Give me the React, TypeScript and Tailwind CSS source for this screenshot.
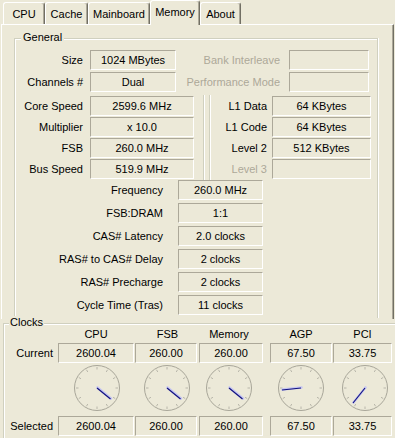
import React from "react";

const boxBase =
  "h-[20px] flex items-center justify-center border border-t-[#ACA899] border-l-[#ACA899] border-b-white border-r-white text-black leading-none";

function Tab({ w, children }: { w: string; children: React.ReactNode }) {
  return (
    <div
      className={`${w} h-[22px] flex items-center justify-center pt-[2px] border-l border-t border-white border-r border-r-[#716F64] rounded-tl-[3px] rounded-tr-[3px] shadow-[inset_-1px_0_0_#ACA899]`}
    >
      {children}
    </div>
  );
}

function Gauge({ dx, dy }: { dx: number; dy: number }) {
  const ticks = Array.from({ length: 12 }, (_, i) => i * 30);
  return (
    <svg width="48" height="48" viewBox="0 0 48 48">
      <circle cx="24" cy="24" r="22.5" fill="none" stroke="#A8A699" strokeWidth="1" />
      {ticks.map((a) => {
        const r = ((a - 90) * Math.PI) / 180;
        const x1 = 24 + Math.cos(r) * 18.5;
        const y1 = 24 + Math.sin(r) * 18.5;
        const x2 = 24 + Math.cos(r) * 21;
        const y2 = 24 + Math.sin(r) * 21;
        return (
          <line key={a} x1={x1} y1={y1} x2={x2} y2={y2} stroke="#B8B6AA" strokeWidth="1" />
        );
      })}
      <line
        x1="24.5"
        y1="23.5"
        x2={24.5 + dx}
        y2={23.5 + dy}
        stroke="#C6C6F2"
        strokeWidth="2.6"
        strokeLinecap="round"
      />
      <line x1="24" y1="24" x2={24 + dx} y2={24 + dy} stroke="#12127E" strokeWidth="1.2" />
    </svg>
  );
}

function TopRow({
  label,
  value,
  rlabel,
}: {
  label: string;
  value: string;
  rlabel: string;
}) {
  return (
    <div className="flex h-[20px] items-center">
      <div className="w-[68px] text-right">{label}</div>
      <div className={`${boxBase} ml-[7px] w-[86px]`}>{value}</div>
      <div className="w-[104px] text-right text-[#ACA899]">{rlabel}</div>
      <div className={`${boxBase} ml-[9px] w-[80px]`}></div>
    </div>
  );
}

function LeftRow({ label, value, cls }: { label: string; value: string; cls: string }) {
  return (
    <div className={`flex h-[20px] items-center ${cls}`}>
      <div className="w-[68px] text-right">{label}</div>
      <div className={`${boxBase} ml-[7px] w-[104px]`}>{value}</div>
    </div>
  );
}

function RightRow({
  label,
  value,
  cls,
  disabled,
}: {
  label: string;
  value: string;
  cls: string;
  disabled?: boolean;
}) {
  return (
    <div className={`flex h-[20px] items-center ${cls}`}>
      <div className={`w-[56px] text-right ${disabled ? "text-[#ACA899]" : ""}`}>{label}</div>
      <div className={`${boxBase} ml-[5px] w-[99px]`}>{value}</div>
    </div>
  );
}

function MidRow({ label, value, cls }: { label: string; value: string; cls: string }) {
  return (
    <div className={`flex h-[20px] items-center ${cls}`}>
      <div className="w-[148px] text-right">{label}</div>
      <div className={`${boxBase} ml-[15px] w-[85px]`}>{value}</div>
    </div>
  );
}

function ClockRow({ label, vals }: { label: string; vals: string[] }) {
  return (
    <div className="flex h-[20px] items-center">
      <div className="w-[54px] text-right pr-[5px]">{label}</div>
      <div className={`${boxBase} w-[76px]`}>{vals[0]}</div>
      <div className={`${boxBase} ml-[1px] w-[62px]`}>{vals[1]}</div>
      <div className={`${boxBase} ml-[2px] w-[64px]`}>{vals[2]}</div>
      <div className={`${boxBase} ml-[7px] w-[62px]`}>{vals[3]}</div>
      <div className={`${boxBase} ml-[1px] w-[59px]`}>{vals[4]}</div>
    </div>
  );
}

export default function App() {
  return (
    <div className="w-[395px] h-[438px] overflow-hidden bg-[#ECE9D8] text-black text-[11px] font-['Liberation_Sans',Arial,sans-serif] select-none">
      {/* Tabs */}
      <div className="flex h-[24px] items-end pl-[3px]">
        <Tab w="w-[42px]">CPU</Tab>
        <Tab w="w-[43px]">Cache</Tab>
        <Tab w="w-[62px]">Mainboard</Tab>
        <div className="relative z-10 w-[50px] h-[25px] mb-[-1px] flex items-center justify-center pb-[1px] bg-[#ECE9D8] border-l border-t border-white border-r border-r-[#716F64] rounded-tl-[3px] rounded-tr-[3px] shadow-[inset_-1px_0_0_#ACA899]">
          Memory
        </div>
        <Tab w="w-[41px]">About</Tab>
      </div>

      {/* Panel */}
      <div className="ml-[1px] w-[393px] h-[295px] border-l border-t border-white border-r border-r-[#716F64] shadow-[inset_-1px_0_0_#ACA899]">
        <div className="relative ml-[12px] mt-[13px] w-[364px] h-[280px] border border-b-0 border-[#D0D0BF] shadow-[inset_1px_1px_0_#fff,1px_0_0_#fff]">
          <div className="absolute left-[6px] top-[-8px] px-[2px] bg-[#ECE9D8] leading-[13px]">General</div>
          <div className="pt-[11px] flex flex-col">
            <TopRow label="Size" value="1024 MBytes" rlabel="Bank Interleave" />
            <div className="mt-[2px]">
              <TopRow label="Channels #" value="Dual" rlabel="Performance Mode" />
            </div>
            <div className="mt-[4px] flex">
              <div className="flex flex-col">
                <LeftRow cls="" label="Core Speed" value="2599.6 MHz" />
                <LeftRow cls="mt-[1px]" label="Multiplier" value="x 10.0" />
                <LeftRow cls="mt-[1px]" label="FSB" value="260.0 MHz" />
                <LeftRow cls="mt-[1px]" label="Bus Speed" value="519.9 MHz" />
              </div>
              <div className="ml-[9px] w-[1px] bg-[#D0D0BF] shadow-[1px_0_0_#fff] -my-[1px]"></div>
              <div className="ml-[5px] w-[1px] bg-[#D0D0BF] shadow-[1px_0_0_#fff] -my-[1px]"></div>
              <div className="ml-[1px] flex flex-col">
                <RightRow cls="" label="L1 Data" value="64 KBytes" />
                <RightRow cls="mt-[1px]" label="L1 Code" value="64 KBytes" />
                <RightRow cls="mt-[1px]" label="Level 2" value="512 KBytes" />
                <RightRow cls="mt-[1px]" label="Level 3" value="" disabled />
              </div>
            </div>
            <MidRow cls="mt-[1px]" label="Frequency" value="260.0 MHz" />
            <MidRow cls="mt-[3px]" label="FSB:DRAM" value="1:1" />
            <MidRow cls="mt-[3px]" label="CAS# Latency" value="2.0 clocks" />
            <MidRow cls="mt-[3px]" label="RAS# to CAS# Delay" value="2 clocks" />
            <MidRow cls="mt-[3px]" label="RAS# Precharge" value="2 clocks" />
            <MidRow cls="mt-[3px]" label="Cycle Time (Tras)" value="11 clocks" />
          </div>
        </div>
      </div>

      {/* Clocks */}
      <div className="relative ml-[3px] mt-[4px] w-[400px] h-[130px] border border-[#D0D0BF] shadow-[inset_1px_1px_0_#fff]">
        <div className="absolute left-[5px] top-[-8px] px-[1px] bg-[#ECE9D8] leading-[13px]">Clocks</div>
        <div className="mt-[3px] flex h-[14px] items-center">
          <div className="w-[54px]"></div>
          <div className="w-[76px] text-center">CPU</div>
          <div className="ml-[1px] w-[62px] text-center pl-[3px]">FSB</div>
          <div className="ml-[2px] w-[64px] text-center pr-[4px]">Memory</div>
          <div className="ml-[7px] w-[62px] text-center">AGP</div>
          <div className="ml-[1px] w-[59px] text-center">PCI</div>
        </div>
        <div className="mt-[2px]">
          <ClockRow label="Current" vals={["2600.04", "260.00", "260.00", "67.50", "33.75"]} />
        </div>
        <div className="mt-[1px] flex h-[48px]">
          <div className="w-[54px]"></div>
          <div className="w-[76px] flex justify-center pl-[1px]">
            <Gauge dx={13.5} dy={11} />
          </div>
          <div className="ml-[1px] w-[62px] flex justify-center pl-[1px]">
            <Gauge dx={13.5} dy={11} />
          </div>
          <div className="ml-[2px] w-[64px] flex justify-center pr-[5px]">
            <Gauge dx={13.5} dy={11} />
          </div>
          <div className="ml-[7px] w-[62px] flex justify-center">
            <Gauge dx={-19} dy={2} />
          </div>
          <div className="ml-[1px] w-[59px] flex justify-center pl-[4px]">
            <Gauge dx={-12} dy={15} />
          </div>
        </div>
        <div className="mt-[4px]">
          <ClockRow label="Selected" vals={["2600.04", "260.00", "260.00", "67.50", "33.75"]} />
        </div>
      </div>
    </div>
  );
}
